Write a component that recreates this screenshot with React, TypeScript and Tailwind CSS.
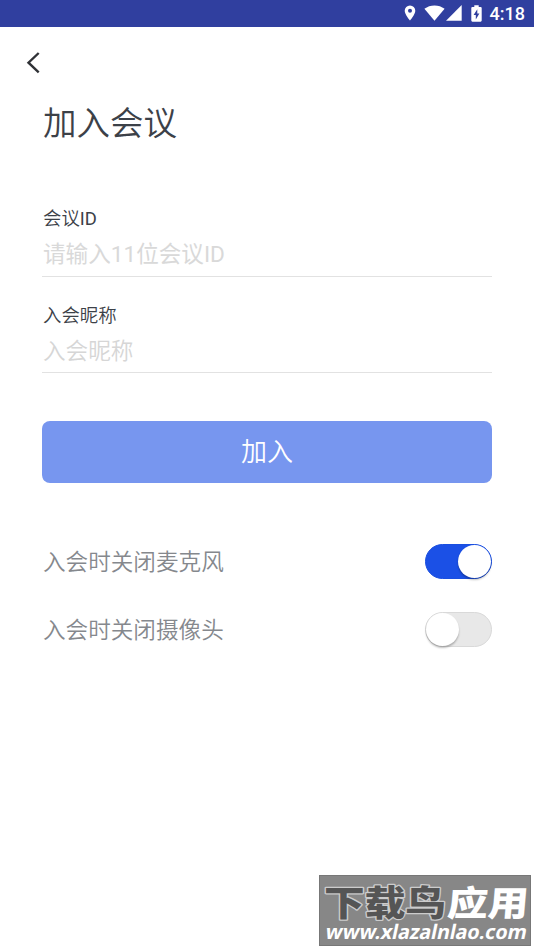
import { useState } from "react";
import clsx from "clsx";

type SwitchProps = {
  label: string;
  checked: boolean;
  onChange: (value: boolean) => void;
};

function StatusBar() {
  return (
    <header className="flex h-[26.5px] items-center justify-end bg-[#303f9f] pr-[9px] text-white">
      <svg width="12" height="16" viewBox="0 0 12 16" fill="currentColor">
        <path
          fillRule="evenodd"
          d="M6 .5A5.3 5.3 0 0 0 .7 5.8C.7 9.6 6 15.5 6 15.5s5.3-5.9 5.3-9.7A5.3 5.3 0 0 0 6 .5Zm0 3.3a2 2 0 1 1 0 4 2 2 0 0 1 0-4Z"
        />
      </svg>
      <svg className="ml-2" width="21" height="16" viewBox="0 0 21 16" fill="currentColor">
        <path d="M.4 3.8C3.3 1.6 6.8.4 10.5.4s7.2 1.2 10.1 3.4L10.5 15.8Z" />
      </svg>
      <svg className="ml-px" width="16" height="16" viewBox="0 0 16 16" fill="currentColor">
        <path d="M0 15.7 15.7 0V15.7Z" />
      </svg>
      <svg className="ml-[9px]" width="11" height="17" viewBox="0 0 11 17" fill="currentColor">
        <path
          fillRule="evenodd"
          d="M3.3.3H7.7V2H9.6Q10.7 2 10.7 3.1V15.6Q10.7 16.7 9.6 16.7H1.4Q.3 16.7.3 15.6V3.1Q.3 2 1.4 2H3.3ZM6.3 4.2 2.6 10H4.8V14.5L8.4 8.6H6.3Z"
        />
      </svg>
      <span className="ml-2 mt-px font-[Roboto] text-[18px] font-medium leading-[26px]">4:18</span>
    </header>
  );
}

function SwitchRow({ label, checked, onChange }: SwitchProps) {
  return (
    <div className="flex h-[35px] items-center justify-between">
      <span className="pl-px pt-[2px] text-[22.6px] font-[350] leading-[34px] text-[#85888d]">{label}</span>
      <button
        type="button"
        role="switch"
        aria-checked={checked}
        aria-label={label}
        onClick={() => onChange(!checked)}
        className={clsx(
          "flex h-[35px] w-[67px] items-center rounded-full border",
          checked ? "justify-end border-[#1a4fe0] bg-[#1b50e6]" : "justify-start border-[#d9d9d9] bg-[#e8e8e8]"
        )}
      >
        <span className="size-[33px] rounded-full bg-white shadow-[0_2px_2px_rgba(0,0,0,0.25)]" />
      </button>
    </div>
  );
}

function Watermark() {
  return (
    <div className="absolute left-[319px] top-[875px] h-[71px] w-[212px] border border-[#777] bg-[#878787]">
      <svg width="210" height="69" viewBox="0 0 210 69">
        <g
          fontFamily="'Noto Sans CJK SC', sans-serif"
          fontSize="35"
          fontWeight="900"
          strokeLinejoin="round"
          paintOrder="stroke"
        >
          <text x="4" y="40" textLength="122" lengthAdjust="spacingAndGlyphs" fill="#555" stroke="#ccc" strokeWidth="2.5">
            下载鸟
          </text>
          <text
            x="130"
            y="40"
            textLength="81"
            lengthAdjust="spacingAndGlyphs"
            fill="#fff"
            transform="skewX(-5)"
          >
            应用
          </text>
        </g>
        <text
          x="18"
          y="63"
          textLength="201"
          lengthAdjust="spacingAndGlyphs"
          fontFamily="'Noto Sans', sans-serif"
          fontSize="20"
          fontWeight="700"
          fill="#fff"
          transform="skewX(-12)"
        >
          www.xlazalnlao.com
        </text>
      </svg>
    </div>
  );
}

export default function App() {
  const [meetingId, setMeetingId] = useState("");
  const [nickname, setNickname] = useState("");
  const [micOff, setMicOff] = useState(true);
  const [cameraOff, setCameraOff] = useState(false);

  return (
    <div className="relative h-[950px] w-[534px] overflow-hidden bg-white font-[Roboto,'Noto_Sans_CJK_SC',sans-serif]">
      <StatusBar />

      <button type="button" aria-label="返回" className="ml-[26px] mt-[24.5px] block text-[#303236]">
        <svg width="15" height="23" viewBox="0 0 15 23" fill="none" stroke="currentColor" strokeWidth="2.4">
          <path d="M12.7 2 2.5 11.7 12.7 21.4" />
        </svg>
      </button>

      <main className="px-[42px]">
        <h1 className="mt-[25px] pl-px text-[33.5px] font-[350] leading-[50px] text-[#3c4148]">加入会议</h1>

        <form onSubmit={(e) => e.preventDefault()}>
          <div className="mt-[56px] h-[72px] border-b border-[#e2e2e2]">
            <label htmlFor="meeting" className="block pl-px text-[18.4px] font-[350] leading-[28px] text-[#3c4148]">
              会议<span className="font-normal">ID</span>
            </label>
            <input
              id="meeting"
              value={meetingId}
              onChange={(e) => setMeetingId(e.target.value)}
              placeholder="请输入11位会议ID"
              className="mt-[4px] block h-[34px] w-full pl-px text-[22.6px] text-[#3c4148] outline-none placeholder:text-[#d9d9d9]"
            />
          </div>

          <div className="mt-[25px] h-[71px] border-b border-[#e2e2e2]">
            <label htmlFor="nickname" className="block pl-px text-[18.4px] font-[350] leading-[28px] text-[#3c4148]">
              入会昵称
            </label>
            <input
              id="nickname"
              value={nickname}
              onChange={(e) => setNickname(e.target.value)}
              placeholder="入会昵称"
              className="mt-[4px] block h-[34px] w-full pl-px text-[22.6px] font-[350] text-[#3c4148] outline-none placeholder:text-[#d6d6d6]"
            />
          </div>

          <button
            type="submit"
            className="mt-[48px] block h-[62px] w-full rounded-[8px] bg-[#7796ef] pt-px text-[26px] font-[350] text-white"
          >
            加入
          </button>
        </form>

        <div className="mt-[61px] flex flex-col gap-[33px]">
          <SwitchRow label="入会时关闭麦克风" checked={micOff} onChange={setMicOff} />
          <SwitchRow label="入会时关闭摄像头" checked={cameraOff} onChange={setCameraOff} />
        </div>
      </main>

      <Watermark />
    </div>
  );
}
